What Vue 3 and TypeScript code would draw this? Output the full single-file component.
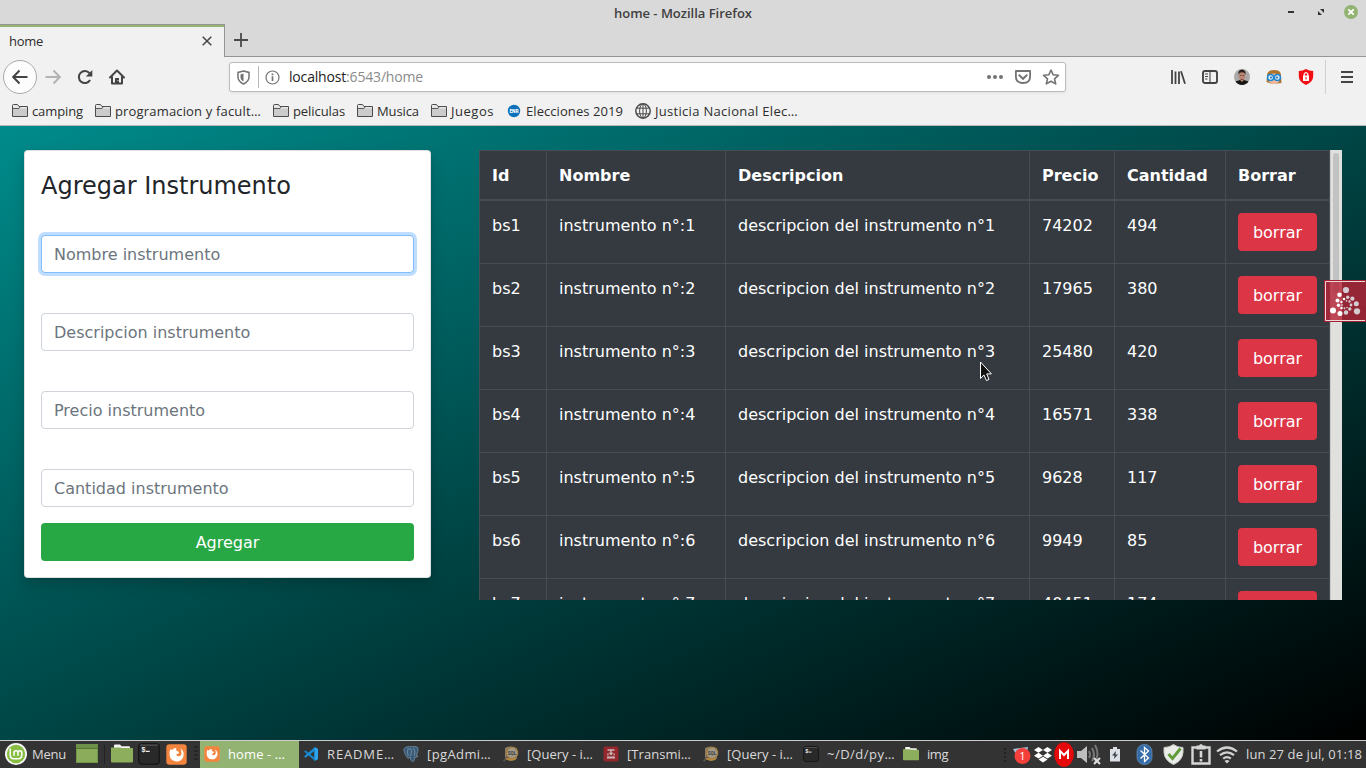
<script setup lang="ts">
import type { Directive } from 'vue'

interface Bookmark { label: string; width: number; icon: string }
interface Row { id: string; name: string; description: string; price: number; quantity: number }
interface Task { label: string; width: number; icon: string; active?: boolean }

const bookmarks: Bookmark[] = [
  { label: 'camping', width: 51, icon: 'folder' },
  { label: 'programacion y facult…', width: 146, icon: 'folder' },
  { label: 'peliculas', width: 52, icon: 'folder' },
  { label: 'Musica', width: 42, icon: 'folder' },
  { label: 'Juegos', width: 43, icon: 'folder' },
  { label: 'Elecciones 2019', width: 97, icon: 'enr' },
  { label: 'Justicia Nacional Elec…', width: 143, icon: 'globe' },
]

const fields = ['Nombre instrumento', 'Descripcion instrumento', 'Precio instrumento', 'Cantidad instrumento']
const headers = ['Id', 'Nombre', 'Descripcion', 'Precio', 'Cantidad', 'Borrar']

const stock: [number, number][] = [
  [74202, 494], [17965, 380], [25480, 420], [16571, 338], [9628, 117], [9949, 85], [40451, 174],
]
const rows: Row[] = stock.map(([price, quantity], i) => ({
  id: `bs${i + 1}`,
  name: `instrumento n°:${i + 1}`,
  description: `descripcion del instrumento n°${i + 1}`,
  price,
  quantity,
}))

const tasks: Task[] = [
  { label: 'home - …', width: 57, icon: 'firefox', active: true },
  { label: 'README…', width: 68, icon: 'code' },
  { label: '[pgAdmi…', width: 64, icon: 'elephant' },
  { label: '[Query - i…', width: 66, icon: 'sql' },
  { label: '[Transmi…', width: 64, icon: 'transmission' },
  { label: '[Query - i…', width: 66, icon: 'sql' },
  { label: '~/D/d/py…', width: 68, icon: 'terminal' },
  { label: 'img', width: 21, icon: 'files' },
]

/* Spreads a label's letters so that it fills the given width. */
const vFit: Directive<HTMLElement, number> = {
  mounted(el, { value }) {
    const range = document.createRange()
    range.selectNodeContents(el)
    const natural = range.getBoundingClientRect().width
    const count = Array.from(el.textContent ?? '').length
    el.style.letterSpacing = `${(value - natural) / count}px`
  },
}
</script>

<template>
  <div class="desktop">
    <svg class="sprites" aria-hidden="true">
      <symbol id="folder" viewBox="0 0 16 16">
        <path d="M.5 13.5V2.5q0-1 1-1h4l1.500 2h8.500v10z" fill="#e6e6e6" stroke="#4c4c4c" />
        <path d="M1 5.500h14V13H1z" fill="#cbcbcb" /><path d="M1 5.500h6l1-1.500" fill="none" stroke="#5a5a5a" />
      </symbol>
      <symbol id="enr" viewBox="0 0 16 16">
        <circle cx="8" cy="8" r="6.200" fill="#0d71bb" />
        <text x="8" y="9.800" text-anchor="middle" font-family="Roboto" font-size="4.800" font-weight="900" fill="#fff">ENR</text>
      </symbol>
      <symbol id="globe" viewBox="0 0 16 16">
        <g fill="none" stroke="#4a4a4a"><circle cx="8" cy="8" r="7.200" stroke-width="1.500" />
          <ellipse cx="8" cy="8" rx="3.400" ry="7" /><path d="M2 5.200h12M2 10.800h12M8 1v14" /></g>
      </symbol>
      <symbol id="firefox" viewBox="0 0 20 20">
        <rect x=".3" y=".3" width="19.400" height="19.400" rx="3" fill="#f4853f" />
        <path d="M4 5Q5.800 6 6.700 5.100 8 3.600 10 3.900 8.700 5.500 10.400 6.700L12.600 7.600Q12 9.700 9.700 9.900 10.400 12 12.700 11.600 15.300 10.900 14.700 7.600L14 4.300Q18 7.500 16.500 12.200 14.700 17 9.700 16.700 4.200 16 3.400 10.800 3 8 4 5Z" fill="#fff" />
      </symbol>
      <symbol id="code" viewBox="0 0 16 16">
        <path d="M11.300 1 15 2.700v10.600L11.300 15z" fill="#2ba4ef" />
        <path d="M1 5.500 2.500 4.300 12 12v3z" fill="#1683cb" /><path d="M1 10.500 2.500 11.800 12 4.400V1z" fill="#1a8dd6" />
      </symbol>
      <symbol id="elephant" viewBox="0 0 16 16">
        <path d="M2.200 1.500Q6-.4 8 .9q5-1.400 6.800.7 1.200 3.400-1.700 8.200l2 .3q-1.700 1.700-3.600 1.100Q11.800 16 9.300 15.500 7.300 15 7.400 11L5 12.500Q1.800 9 .8 4q0-1.600 1.400-2.500Z" fill="#375a78" stroke="#7e96a8" stroke-width=".7" />
        <path d="M5.300 2Q3.700 6 5.200 10M6 3.200Q8.800 2 8.500 6L7.500 10M10.500 2q2.700 4 .7 7.800" fill="none" stroke="#8499a7" stroke-width=".8" />
      </symbol>
      <symbol id="sql" viewBox="0 0 16 16">
        <path d="M2 2Q4 .5 8 .5t6 2v10Q12 15 7 14.800L2 12z" fill="#867d6a" />
        <circle cx="9" cy="7" r="5.700" fill="#a09a8d" stroke="#a47c39" stroke-width="1.200" />
        <path d="m4.500 11-4 4.200" stroke="#56504a" stroke-width="2" /><path d="M3 12.500q5 2.500 9.500 0" fill="none" stroke="#b5883f" stroke-width="1.800" />
        <text x="9" y="8.700" text-anchor="middle" font-family="Roboto" font-size="4.600" font-weight="700" fill="#3d3935">SQL</text>
      </symbol>
      <symbol id="transmission" viewBox="0 0 16 16">
        <rect x=".5" y=".5" width="15" height="15" rx="2" fill="#96282d" />
        <path d="M4.500 4h7M8 4v4" fill="none" stroke="#c8b8b8" stroke-width="1.400" /><path d="M5.500 6.800h5L8 9.600z" fill="#c8b8b8" />
        <path d="M4.300 8.500h1.200M10.500 8.500h1.200M4 11.500h8" fill="none" stroke="#c8b8b8" stroke-width="2" />
      </symbol>
      <symbol id="terminal" viewBox="0 0 21 21">
        <rect x=".7" y=".7" width="19.600" height="19.600" rx="3" fill="#292929" stroke="#111" />
        <path d="M2 2h17" stroke="#5c5c5c" />
        <text x="3" y="8.600" font-family="Liberation Mono" font-size="7" font-weight="700" fill="#eee">$</text>
        <path d="M7.500 8h3.700" stroke="#eee" stroke-width="1.200" />
      </symbol>
      <symbol id="files" viewBox="0 0 22 20">
        <path d="M3 5V1.500Q3 .5 4 .5h5l1.500 1.700H18q1 0 1 1V6H3z" fill="#f5f5f5" />
        <path d="M0 3.500h9L11 4h10q1 0 1 1v12.500q0 1-1 1H1q-1 0-1-1z" fill="#8cae5d" />
      </symbol>
    </svg>

    <header class="titlebar">
      <span class="win-title"><span v-fit="138" class="label" style="width: 138px">home - Mozilla Firefox</span></span>
      <svg class="win-buttons" width="78" height="24" viewBox="0 0 78 24">
        <path d="M0 12h6" stroke="#333" stroke-width="2" />
        <path d="M32 9h4v4zM30 11l4 4h-4z" fill="#333" />
        <circle cx="63" cy="12" r="7" fill="#92b372" /><path d="m60.300 9.300 5.400 5.400m0-5.400-5.400 5.400" stroke="#fff" stroke-width="1.800" />
      </svg>
    </header>

    <div class="tabs">
      <div class="tab">
        <span v-fit="34" class="label" style="width: 34px">home</span>
        <svg width="10" height="10" viewBox="0 0 10 10"><path d="m.7.7 8.600 8.600m0-8.600L.7 9.300" stroke="#444" stroke-width="1.500" /></svg>
      </div>
      <div class="tab-rest"><svg width="14" height="14" viewBox="0 0 14 14"><path d="M7 0v14M0 7h14" stroke="#4a4a4a" stroke-width="1.800" /></svg></div>
    </div>

    <nav class="toolbar">
      <span class="back"><svg width="16" height="16" viewBox="0 0 16 16" fill="none" stroke="#444" stroke-width="2"><path d="M15.500 8H1.500M7.500 1.500 1.200 8l6.300 6.500" /></svg></span>
      <svg class="forward" width="16" height="16" viewBox="0 0 16 16" fill="none" stroke="#b3b3b3" stroke-width="2"><path d="M.5 8h14M8.500 1.500 14.800 8l-6.300 6.500" /></svg>
      <svg class="reload" width="16" height="16" viewBox="0 0 16 16"><path d="M13.100 11A6 6 0 1 1 12.500 4.200" fill="none" stroke="#444" stroke-width="2" /><path d="M15.300 1v6.500H8.800z" fill="#444" /></svg>
      <svg class="home" width="16" height="16" viewBox="0 0 16 16"><path d="M1 8.500 8 1.500l7 7M3 8v6.500h10V8" fill="none" stroke="#444" stroke-width="2" stroke-linejoin="round" stroke-linecap="round" /><path d="M6 9h4v6H6z" fill="#444" /><path d="M8.500 11.500h1" stroke="#eee" /></svg>
      <div class="url">
        <svg width="13" height="15" viewBox="0 0 13 15"><path d="M6.500 1 12 2.400V7q0 4.500-5.500 7Q1 11.500 1 7V2.400z" fill="none" stroke="#737373" stroke-width="1.500" /><path d="M6.500 3.600v7.900Q3.500 10 3.500 7V4.400z" fill="#737373" /></svg>
        <i class="divider"></i>
        <svg width="15" height="15" viewBox="0 0 15 15"><circle cx="7.500" cy="7.500" r="6.500" fill="none" stroke="#737373" stroke-width="1.200" /><path d="M7.500 6.300V11M7.500 3.500v1.700" stroke="#737373" stroke-width="1.700" /></svg>
        <span v-fit="134" class="label address" style="width: 134px">localhost<em>:6543/home</em></span>
        <svg class="page-actions" width="74" height="18" viewBox="0 0 74 18">
          <g fill="#737373"><circle cx="3" cy="9" r="2" /><circle cx="9" cy="9" r="2" /><circle cx="15" cy="9" r="2" /></g>
          <path d="M29.900 3h14.200v5.500q0 6.500-7.100 6.500t-7.100-6.500z" fill="none" stroke="#737373" stroke-width="1.800" stroke-linejoin="round" /><path d="m33.300 7.200 3.700 3.600 3.700-3.600" fill="none" stroke="#737373" stroke-width="1.900" stroke-linecap="round" />
          <path d="m65 2 2.200 4.800 5.200.5-3.900 3.500 1.200 5.100L65 13.200l-4.700 2.700 1.200-5.100-3.900-3.500 5.200-.5z" fill="none" stroke="#737373" stroke-width="1.600" stroke-linejoin="round" />
        </svg>
      </div>
      <div class="extensions">
        <svg width="16" height="16" viewBox="0 0 16 16"><path d="M2 1v14M5.500 2.500V15M9 2.500V15M11 2.300l4 12.400" stroke="#444" stroke-width="1.800" /></svg>
        <svg width="16" height="16" viewBox="0 0 16 16"><rect x="1" y="2" width="14" height="12" rx="2" fill="none" stroke="#444" stroke-width="1.900" /><path d="M8 2v12M3 5h3M3 7.500h3M3 10h2.500" stroke="#444" stroke-width="1.100" /></svg>
        <svg width="16" height="16" viewBox="0 0 16 16"><circle cx="8" cy="8" r="8" fill="#aaa9a8" /><path d="M1.500 12.600 6 11h4l4.500 1.600A8 8 0 0 1 1.500 12.600" fill="#171615" /><path d="M5 4.500Q8 1 11 4.500v4Q10 12 8 13 6 12 5 8.500z" fill="#b98473" /><path d="M4.500 6Q3.800.8 8 .5q4.200.3 3.500 5.500L10.500 4Q8 2.500 5.500 4z" fill="#2c201d" /><path d="M5.800 6.500h1.700m1 0h1.700M6.700 10.500h2.600" stroke="#6a4136" stroke-width=".8" /></svg>
        <svg width="16" height="16" viewBox="0 0 16 16"><path d="M1 7q-.5-6 7-6t7 6l.5 7-4 .5h-7L.5 13z" fill="#ad762e" /><path d="M3 6q5-3 10 0v7q-5 4-10 0z" fill="#f0b99a" /><circle cx="4.600" cy="8.500" r="3" fill="#d9f1ff" stroke="#1f85d2" stroke-width="1.500" /><circle cx="11.400" cy="8.500" r="3" fill="#d9f1ff" stroke="#1f85d2" stroke-width="1.500" /><circle cx="5" cy="8.500" r="1" fill="#2c6494" /><circle cx="11" cy="8.500" r="1" fill="#2c6494" /></svg>
        <svg width="16" height="16" viewBox="0 0 16 16"><path d="M8 0q3 2 7.200 2v5q0 6-7.200 9Q.8 13 .8 7V2Q5 2 8 0" fill="#f20d12" /><rect x="5" y="6.500" width="6" height="5.500" fill="#fff" /><path d="M6.200 7V5q1.800-2.600 3.600 0v2" fill="none" stroke="#fff" stroke-width="1.200" /><path d="M8 8v2.500" stroke="#e11" /></svg>
      </div>
      <i class="menu-divider"></i>
      <svg class="menu" width="12" height="12" viewBox="0 0 12 12"><path d="M0 1h12M0 6h12M0 11h12" stroke="#444" stroke-width="1.800" /></svg>
    </nav>

    <div class="bookmarks">
      <span v-for="b in bookmarks" :key="b.label" class="bookmark">
        <svg width="16" height="16"><use :href="`#${b.icon}`" /></svg>
        <span v-fit="b.width" class="label" :style="{ width: `${b.width}px` }">{{ b.label }}</span>
      </span>
    </div>

    <main class="page">
      <form class="card" @submit.prevent>
        <h4>Agregar Instrumento</h4>
        <input v-for="(f, i) in fields" :key="f" type="text" :placeholder="f" :class="{ focused: i === 0 }">
        <button class="add" type="submit">Agregar</button>
      </form>
      <div class="list">
        <div class="table">
          <div class="tr head"><div v-for="h in headers" :key="h" class="cell">{{ h }}</div></div>
          <div v-for="r in rows" :key="r.id" class="tr">
            <div class="cell">{{ r.id }}</div>
            <div class="cell">{{ r.name }}</div>
            <div class="cell">{{ r.description }}</div>
            <div class="cell">{{ r.price }}</div>
            <div class="cell">{{ r.quantity }}</div>
            <div class="cell action"><button class="delete" type="button">borrar</button></div>
          </div>
        </div>
        <div class="scrollbar"><i></i></div>
      </div>
    </main>

    <footer class="taskbar">
      <div class="launchers">
        <svg width="22" height="22" viewBox="0 0 22 22"><circle cx="11" cy="11" r="11" fill="#f8f8f8" /><circle cx="11" cy="11" r="9.200" fill="#87bd43" /><path d="M5.200 5.500v6.500q0 3.700 3.700 3.700h4.200q3.700 0 3.700-3.700V9.800q0-2-1.900-2t-1.900 2v2.900-2.900q0-2-2-2t-2 2v2.900" fill="none" stroke="#fff" stroke-width="1.500" /></svg>
        <span v-fit="34" class="label menu-label" style="width: 34px">Menu</span>
        <svg class="show-desktop" width="22" height="19" viewBox="0 0 22 19"><rect x=".5" y=".5" width="21" height="18" fill="#8bad5b" stroke="#72964a" /><path d="M0 0h22v4H0z" fill="#6e914a" /><path d="M0 4.500h22" stroke="#587636" /></svg>
        <i class="task-divider"></i>
        <svg width="22" height="20"><use href="#files" /></svg>
        <svg width="22" height="22"><use href="#terminal" /></svg>
        <svg width="21" height="21"><use href="#firefox" /></svg>
        <i class="grip"></i>
      </div>
      <div class="tasks">
        <div v-for="(t, i) in tasks" :key="i" class="task" :class="{ active: t.active }">
          <svg width="16" height="16"><use :href="`#${t.icon}`" /></svg>
          <span v-fit="t.width" class="label" :style="{ width: `${t.width}px` }">{{ t.label }}</span>
        </div>
      </div>
      <svg class="tray" width="240" height="27" viewBox="1000 741 240 27">
        <path d="M1005 748v14" stroke="#222" stroke-width="2" stroke-dasharray="2 2" />
        <path d="m1013 749 15-2-3 14-6-2z" fill="#a7c2d9" /><circle cx="1022.500" cy="756" r="8" fill="#f43f3b" /><text x="1022.500" y="760" text-anchor="middle" font-family="Open Sans" font-size="11" fill="#fff">1</text>
        <path d="m1038.500 747 4.500 2.900-4.500 2.900-4.500-2.900zm9 0 4.500 2.900-4.500 2.900-4.500-2.900zm-9 5.800 4.500 2.900-4.500 2.900-4.500-2.900zm9 0 4.500 2.900-4.500 2.900-4.500-2.900zm-4.500 3.900 4.500 2.900-4.500 2.900-4.500-2.900z" fill="#fff" />
        <ellipse cx="1064" cy="754.500" rx="9.800" ry="12.300" fill="#e7080b" /><path d="M1060 759v-8l4 4 4-4v8" fill="none" stroke="#fff" stroke-width="2" />
        <path d="M1077 751h4l6-5v17l-6-5h-4z" fill="#bebebe" /><g fill="none" stroke="#777" stroke-width="2"><path d="M1089 751q2 3.500 0 7M1092 748q4 6.500 0 13M1095 745q5 9 0 17" /></g><path d="m1094 758 6 6m0-6-6 6" stroke="#ddd" stroke-width="2" />
        <path d="M1113 747h4v2h3v12.500h-10V749h3z" fill="#dce0e5" /><path d="m1116 751-4 4.500h2.500l-.5 3.500 4-4.500h-2.500z" fill="#38424d" />
        <rect x="1137" y="744.500" width="15" height="20" rx="7" fill="#356ca8" stroke="#6790b9" stroke-width=".7" /><path d="m1140.500 750.500 8 7.500-4 3.500v-14l4 3.500-8 7.500" fill="none" stroke="#fff" stroke-width="1.300" />
        <path d="M1173.500 744.500q4 3 9.500 3v5q-.5 8-9.500 12-9-4-9.500-12v-5q5.500 0 9.500-3" fill="#e9ece7" stroke="#c8ccc5" /><path d="m1168.500 754 4 4.500 8-10" fill="none" stroke="#629b39" stroke-width="3" />
        <path d="M1192.500 747.500h17v16h-17z" fill="none" stroke="#d6d6d6" stroke-width="2.400" /><path d="M1196.500 747v-1.500h2.500q2-3 4 0h2.500v4h-9z" fill="#d6d6d6" /><path d="M1201 751v6.500M1201 759v2.500" stroke="#d6d6d6" stroke-width="2.600" />
        <g fill="none" stroke="#d2d2d2" stroke-width="2.200"><path d="M1217 751.500q10-8 20 0M1220 755.200q7-5.600 14 0M1223.200 758.700q3.800-3 7.600 0" /></g><path d="m1224.500 761 2.500 2.500 2.500-2.500q-2.500-2-5 0" fill="#d2d2d2" />
      </svg>
      <span v-fit="116" class="label clock" style="width: 116px">lun 27 de jul, 01:18</span>
    </footer>

    <svg class="widget" width="42" height="42" viewBox="0 0 42 42">
      <rect x=".5" y=".5" width="43" height="41" fill="rgba(181,35,55,.82)" stroke="#a91e31" /><path d="M41 1.500H1.500v39H41" fill="none" stroke="#ebdada" />
      <g fill="#fff"><circle cx="9" cy="30.500" r="3" /><circle cx="16" cy="33.500" r="2.500" /><circle cx="15.500" cy="14.700" r="2.300" /><circle cx="13.500" cy="20.500" r="2" /><circle cx="14.500" cy="25.300" r="1.700" /><circle cx="17.500" cy="28" r="1.300" /><circle cx="17.500" cy="22" r="1.200" /><circle cx="20" cy="19" r="1.300" /></g>
      <g fill="#d4cdd1"><circle cx="22" cy="10" r="3.100" /><circle cx="33" cy="31.300" r="3.100" /><circle cx="32.300" cy="23.700" r="2.500" /><circle cx="28.400" cy="18.700" r="2.100" /><circle cx="23.700" cy="17.300" r="1.700" /><circle cx="22" cy="32.500" r="2.200" /><circle cx="25.800" cy="29" r="1.700" /><circle cx="27" cy="25" r="1.400" /><circle cx="25.500" cy="21.500" r="1.200" /><circle cx="22.500" cy="20.800" r=".9" /><circle cx="18" cy="25" r=".9" /><circle cx="20.500" cy="28.300" r="1" /><circle cx="23" cy="27.500" r=".8" /></g>
    </svg>
    <svg class="pointer" width="14" height="21" viewBox="0 0 14 21"><path d="M1.500 1v16.500l3.400-3.600 2.600 5.700 2.500-1.300-2.300-5.400h4.700z" fill="#111" stroke="#fff" /></svg>
  </div>
</template>

<style>
html, body { margin: 0; overflow: hidden; }
</style>

<style scoped>
* { box-sizing: border-box; }
svg { display: block; flex: none; }
.desktop { position: relative; display: flex; flex-direction: column; width: 1366px; height: 768px; overflow: hidden; background: #f1f1f1; color: #2d2d2d; font: 13px/16px "Open Sans", "Noto Sans", sans-serif; }
.sprites { display: none; }
.label { display: inline-block; flex: none; white-space: nowrap; }

.titlebar { display: flex; align-items: center; height: 24px; background: #d9d9d9; flex: none; }
.win-title { flex: 1; padding: 2px 0 0 614px; font-weight: 600; color: #404040; }
.tabs { display: flex; height: 33px; flex: none; background: #d9d9d9; }
.tab { display: flex; align-items: center; justify-content: space-between; width: 225px; padding: 0 12px 0 9px; background: linear-gradient(#92b372 2px, #f1f1f1 2px); border-top: 1px solid #959595; border-right: 1px solid #959595; }
.tab-rest { flex: 1; padding: 9px 0 0 9px; border-bottom: 1px solid #959595; }

.toolbar { display: flex; align-items: center; height: 40px; flex: none; padding-left: 3px; }
.back { display: flex; align-items: center; justify-content: center; width: 34px; height: 34px; border: 1px solid #aaa; border-radius: 50%; background: #fcfcfc; }
.forward { margin-left: 8px; }
.reload { margin-left: 16px; }
.home { margin-left: 16px; }
.url { display: flex; align-items: center; width: 837px; height: 30px; margin-left: 104px; padding: 0 5px 0 7px; background: #fff; border: 1px solid #bcbcbc; border-radius: 3px; box-shadow: 0 1px 3px rgba(0, 0, 0, .07); }
.divider { width: 1px; height: 22px; margin: 0 6px 0 8px; background: #b7b7b7; }
.address { margin-left: 9px; font-size: 14px; line-height: 18px; color: #222; }
.address em { font-style: normal; color: #8b8b8b; }
.page-actions { margin-left: auto; }
.extensions { display: flex; gap: 16px; margin-left: 104px; }
.menu-divider { width: 1px; height: 34px; margin: 0 15px 0 11px; background: #cfcfcf; }

.bookmarks { display: flex; align-items: center; gap: 12px; height: 29px; flex: none; padding: 0 12px; border-bottom: 1px solid #b8b8b8; }
.bookmark { display: flex; align-items: center; gap: 4px; }

.page { display: flex; align-items: flex-start; gap: 48px; height: 614px; flex: none; padding: 24px; background: linear-gradient(to bottom right, darkcyan, black); font: 16px/24px "DejaVu Sans", sans-serif; }
.card { display: flex; flex-direction: column; width: 407px; height: 428px; padding: 16px; background: #fff; border: 1px solid rgba(0, 0, 0, .125); border-radius: 4px; box-shadow: 0 2px 4px rgba(0, 0, 0, .08), 0 8px 16px rgba(0, 0, 0, .15); }
.card h4 { height: 29px; margin: 5px 0 34px; font-size: 24px; line-height: 29px; font-weight: 400; color: #212529; }
.card input { width: 373px; height: 38px; margin: 0 0 40px; padding: 6px 12px; border: 1px solid #ced4da; border-radius: 4px; background: #fff; font: inherit; outline: 0; }
.card input::placeholder { color: #6c757d; opacity: 1; }
.card .focused { border-color: #80bdff; box-shadow: 0 0 0 3px rgba(0, 123, 255, .25); }
.card input:last-of-type { margin-bottom: 16px; }
.add, .delete { height: 38px; padding: 2px 0 0; border: 0; border-radius: 4px; color: #fff; font: inherit; }
.add { background: #28a745; }
.delete { display: block; width: 79px; background: #dc3545; }

.list { display: flex; width: 863px; height: 450px; overflow: hidden; }
.table { width: 851px; height: max-content; flex: none; background: #343a40; border: solid #454d55; border-width: 1px 0 0 1px; color: #fff; }
.tr { display: grid; grid-template-columns: 67px 179px 304px 85px 111px 104px; height: 63px; }
.cell { padding: 13px 0 0 12px; border: solid #454d55; border-width: 0 1px 1px 0; white-space: nowrap; }
.head { height: 50px; font-weight: 700; }
.head .cell { border-bottom-width: 2px; }
.action { padding-top: 12px; }
.scrollbar { width: 12px; padding: 3px; background: #e0e0df; border-left: 1px solid #c9c9c7; }
.scrollbar i { display: block; width: 6px; height: 140px; margin-left: -1px; border-radius: 3px; background: #c1c3c2; }

.taskbar { display: flex; height: 28px; flex: none; border-top: 1px solid #c9cccb; background: #333; color: #dadada; }
.launchers { display: flex; align-items: center; width: 200px; padding: 0 0 1px 5px; }
.menu-label { margin-left: 5px; }
.show-desktop { margin: 0 6px 1px 10px; }
.task-divider { width: 1px; height: 19px; margin-right: 6px; background: #222; }
.launchers svg:nth-of-type(4) { margin: 0 6px 0 5px; }
.grip { width: 4px; height: 16px; margin-left: 7px; background: repeating-linear-gradient(#262626 0 2px, #333 2px 4px); }
.tasks { display: flex; width: 800px; }
.task { display: flex; align-items: center; gap: 8px; width: 100px; padding: 0 0 1px 4px; }
.task.active { width: 99px; background: #92b372; color: #fff; }
.clock { margin: 5px 0 0 6px; }

.widget { position: absolute; left: 1324px; top: 280px; }
.pointer { position: absolute; left: 979px; top: 361px; }
</style>
